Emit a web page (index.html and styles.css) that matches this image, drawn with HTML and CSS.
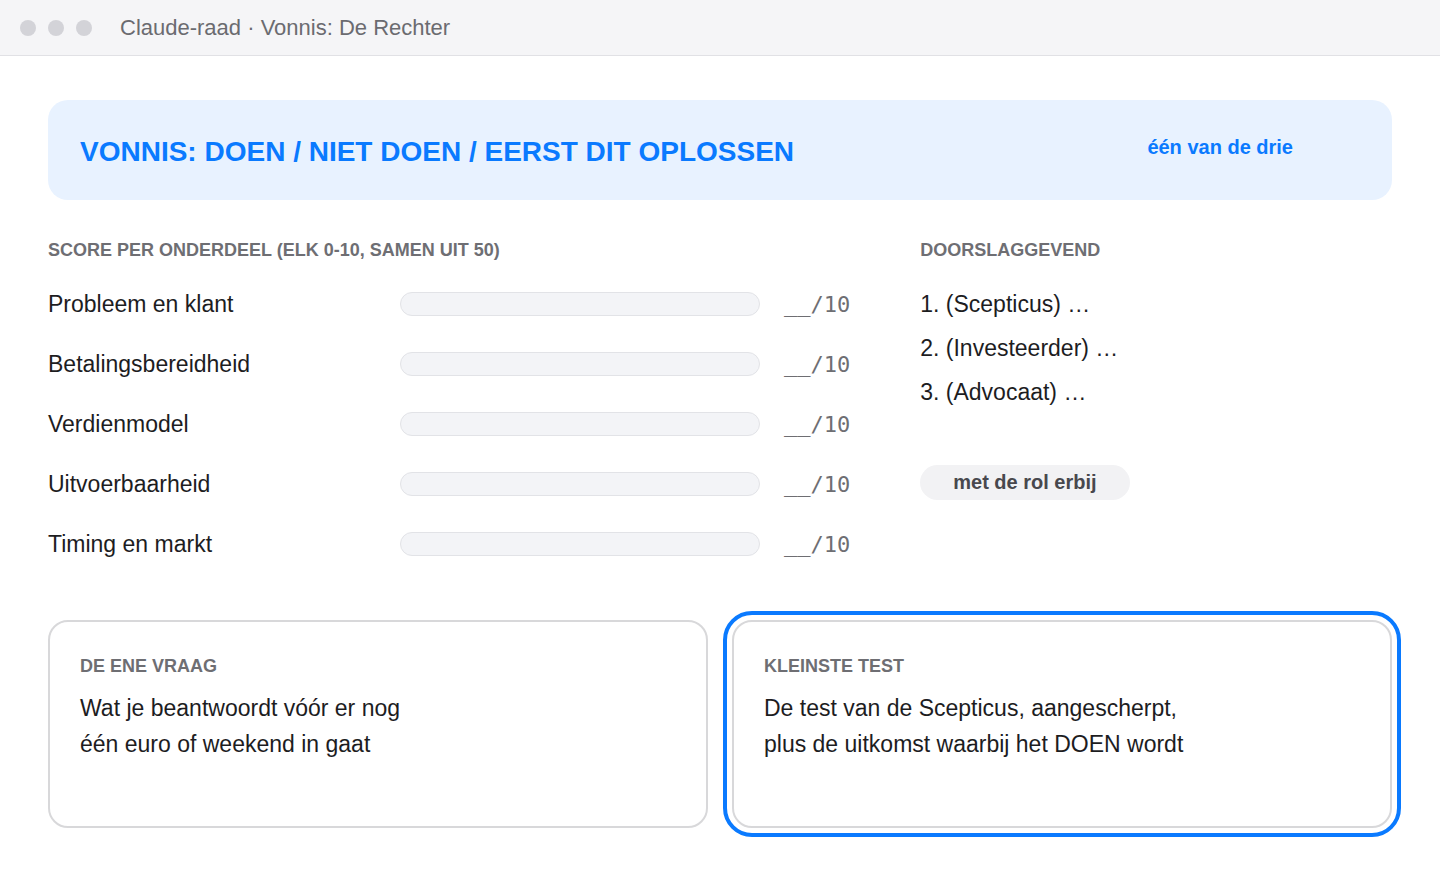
FILE: index.html
```html
<!DOCTYPE html>
<html lang="nl">
<head>
<meta charset="utf-8">
<title>Claude-raad · Vonnis: De Rechter</title>
<link rel="stylesheet" href="styles.css">
</head>
<body>
<div class="titlebar">
  <span class="dot"></span><span class="dot"></span><span class="dot"></span>
  <span class="wintitle">Claude-raad · Vonnis: De Rechter</span>
</div>
<main class="page">
  <section class="banner">
    <h1 class="verdict">VONNIS: DOEN / NIET DOEN / EERST DIT OPLOSSEN</h1>
    <span class="verdict-sub">één van de drie</span>
  </section>

  <section class="scores">
    <div class="score-col">
      <h2 class="label">SCORE PER ONDERDEEL (ELK 0-10, SAMEN UIT 50)</h2>
      <div class="row"><span class="row-name">Probleem en klant</span><span class="bar"></span><span class="row-score">__/10</span></div>
      <div class="row"><span class="row-name">Betalingsbereidheid</span><span class="bar"></span><span class="row-score">__/10</span></div>
      <div class="row"><span class="row-name">Verdienmodel</span><span class="bar"></span><span class="row-score">__/10</span></div>
      <div class="row"><span class="row-name">Uitvoerbaarheid</span><span class="bar"></span><span class="row-score">__/10</span></div>
      <div class="row"><span class="row-name">Timing en markt</span><span class="bar"></span><span class="row-score">__/10</span></div>
    </div>
    <div class="decisive-col">
      <h2 class="label">DOORSLAGGEVEND</h2>
      <ol class="decisive">
        <li>1. (Scepticus) …</li>
        <li>2. (Investeerder) …</li>
        <li>3. (Advocaat) …</li>
      </ol>
      <span class="pill">met de rol erbij</span>
    </div>
  </section>

  <section class="cards">
    <div class="card">
      <h2 class="label">DE ENE VRAAG</h2>
      <p class="card-text">Wat je beantwoordt vóór er nog<br>één euro of weekend in gaat</p>
    </div>
    <div class="card card-active">
      <h2 class="label">KLEINSTE TEST</h2>
      <p class="card-text">De test van de Scepticus, aangescherpt,<br>plus de uitkomst waarbij het DOEN wordt</p>
    </div>
  </section>
</main>
</body>
</html>
```
FILE: styles.css
```css
* { box-sizing: border-box; }
html, body { margin: 0; padding: 0; }
body {
  background: #ffffff;
  font-family: "Liberation Sans", Arial, Helvetica, sans-serif;
  color: #1d1d1f;
  width: 1440px;
  height: 880px;
  overflow: hidden;
}

.titlebar {
  display: flex;
  align-items: center;
  height: 56px;
  padding-left: 20px;
  background: #f5f5f7;
  border-bottom: 1px solid #e1e1e5;
}
.dot {
  width: 16px;
  height: 16px;
  border-radius: 50%;
  background: #d3d3d8;
  margin-right: 12px;
}
.wintitle {
  margin-left: 16px;
  font-size: 22px;
  color: #6b6b70;
}

.page {
  padding: 44px 48px 0;
}

.banner {
  display: flex;
  justify-content: space-between;
  align-items: flex-start;
  height: 100px;
  padding: 34px 99px 0 32px;
  background: #e8f2ff;
  border-radius: 20px;
}
.verdict {
  margin: 0;
  font-size: 28px;
  line-height: 36px;
  font-weight: 700;
  color: #0a7aff;
}
.verdict-sub {
  margin-top: 1px;
  font-size: 20px;
  line-height: 24px;
  font-weight: 700;
  color: #0a7aff;
}

.label {
  margin: 0;
  font-size: 18px;
  line-height: 22px;
  font-weight: 700;
  color: #6e6e73;
}

.scores {
  display: grid;
  grid-template-columns: 1fr 472px;
  column-gap: 70px;
  margin-top: 39px;
}
.score-col .label { margin-bottom: 13px; }
.row {
  display: flex;
  align-items: center;
  height: 60px;
}
.row-name {
  width: 352px;
  font-size: 23px;
}
.bar {
  width: 360px;
  height: 24px;
  border-radius: 12px;
  background: #f3f4f7;
  border: 1px solid #e2e3e7;
}
.row-score {
  margin-left: 24px;
  font-family: "DejaVu Sans Mono", "Liberation Mono", monospace;
  font-size: 22px;
  color: #6e6e73;
}

.decisive {
  list-style: none;
  margin: 21px 0 0;
  padding: 0;
}
.decisive li {
  font-size: 23px;
  line-height: 44px;
}
.pill {
  display: inline-block;
  margin-top: 51px;
  padding: 6px 33px;
  font-size: 20px;
  line-height: 23px;
  font-weight: 700;
  color: #48484d;
  background: #f2f2f4;
  border-radius: 18px;
}

.cards {
  display: grid;
  grid-template-columns: 1fr 1fr;
  column-gap: 24px;
  margin-top: 46px;
}
.card {
  min-height: 208px;
  padding: 33px 30px 32px;
  border: 2px solid #d8d8da;
  border-radius: 20px;
  background: #ffffff;
}
.card-active {
  outline: 4px solid #0a7aff;
  outline-offset: 5px;
}
.card-text {
  margin: 13px 0 0;
  font-size: 23px;
  line-height: 36px;
}
```
